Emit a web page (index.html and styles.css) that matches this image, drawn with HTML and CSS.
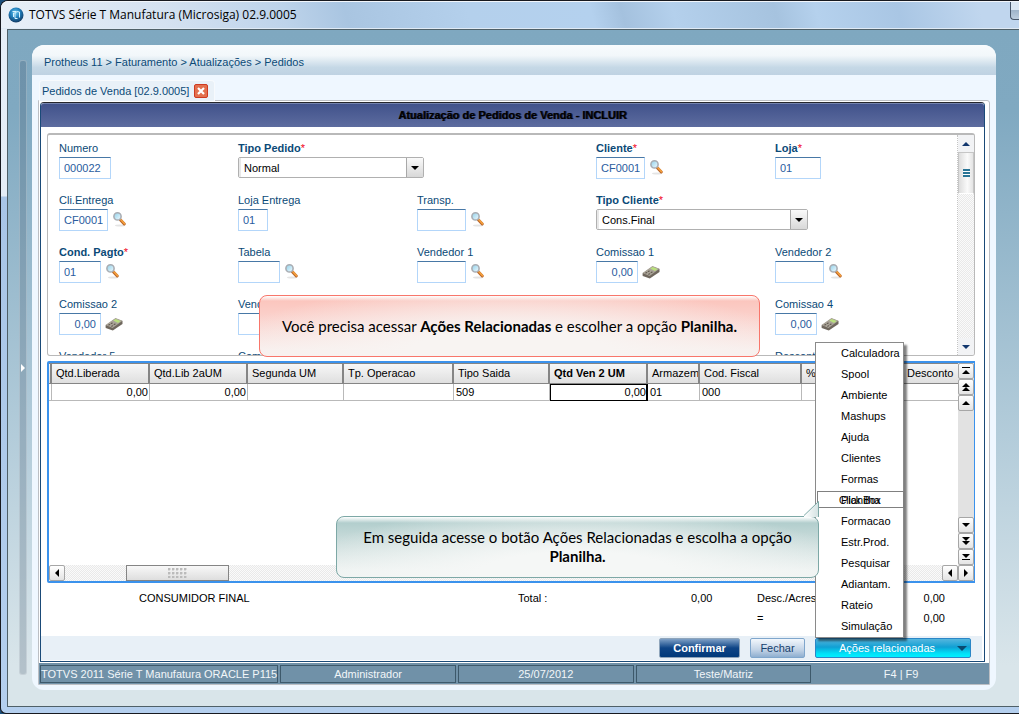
FILE: index.html
```html
<!DOCTYPE html>
<html lang="pt-BR">
<head>
<meta charset="utf-8">
<title>TOTVS Série T Manufatura</title>
<link rel="stylesheet" href="styles.css">
</head>
<body>
<svg class="defs" aria-hidden="true">
  <defs>
    <radialGradient id="orb" cx="45%" cy="35%" r="65%"><stop offset="0" stop-color="#6ec8ee"/><stop offset="0.5" stop-color="#2180bd"/><stop offset="1" stop-color="#123a63"/></radialGradient>
    <linearGradient id="lens" x1="0" y1="0" x2="1" y2="1"><stop offset="0" stop-color="#8fd0ea"/><stop offset="1" stop-color="#f2fbff"/></linearGradient>
    <linearGradient id="tail" x1="0" y1="0" x2="1" y2="0"><stop offset="0" stop-color="#fff"/><stop offset="1" stop-color="#d3e2e2"/></linearGradient>
    <symbol id="search" viewBox="0 0 16 16">
      <ellipse cx="8" cy="14.400" rx="5" ry="1" fill="#e4e4e4"/>
      <path d="M8.300 8.800l4 4.200" stroke="#b9662a" stroke-width="3" stroke-linecap="round"/>
      <path d="M8.900 8.800l3.600 3.800" stroke="#f7a13c" stroke-width="1.600" stroke-linecap="round"/>
      <circle cx="5.500" cy="5.400" r="3.600" fill="url(#lens)" stroke="#a9adb3" stroke-width="1.600"/>
    </symbol>
    <symbol id="calc" viewBox="0 0 18 14">
      <path d="M.5 8.400L10.500 1.500l7 2.500v3L7.800 13.500.700 11z" fill="#6f675d"/>
      <path d="M.5 8L10.500 1l7 2.800L7.600 11z" fill="#aaa498"/>
      <path d="M8.300 3.600L10.700 1.900l5 2-2.700 2z" fill="#b9e07d"/>
      <path d="M2.900 8.100l1.500-1 1.200.5-1.500 1zM5.400 6.400l1.500-1 1.200.5-1.500 1zM5.800 9.300l1.500-1 1.200.5-1.500 1zM8.300 7.500l1.500-1 1.200.5-1.500 1z" fill="#5c544b"/>
    </symbol>
    <symbol id="up" viewBox="0 0 8 4"><path d="M0 4L4 0l4 4z" fill="currentColor"/></symbol>
    <symbol id="down" viewBox="0 0 8 4"><path d="M0 0h8L4 4z" fill="currentColor"/></symbol>
  </defs>
</svg>
<div class="window">
  <header class="titlebar">
    <svg class="logo" viewBox="0 0 16 16"><circle cx="8" cy="8" r="7.500" fill="url(#orb)"/><path d="M4.500 4.500h3.500v1.500H5.500v4M8.500 4.500l3 .5v5.500M7 6.500v5h2.500" fill="none" stroke="#d8f3ff" stroke-width="1"/></svg>
    <h1 class="caption">TOTVS Série T Manufatura (Microsiga) 02.9.0005</h1>
    <span class="sysbutton"></span>
  </header>
  <div class="desktop">
    <div class="splitter"><svg class="splitter-arrow" viewBox="0 0 4 8"><path d="M0 0l4 4-4 4z" fill="#fff"/></svg></div>
    <div class="shell">
      <nav class="breadcrumb">Protheus 11 &gt; Faturamento &gt; Atualizações &gt; Pedidos</nav>
      <div class="tabs">
        <div class="tab"><span>Pedidos de Venda [02.9.0005]</span>
          <button class="tab-close" aria-label="Fechar aba"><svg viewBox="0 0 8 8"><path d="M1 1l6 6M7 1L1 7" stroke="#fff" stroke-width="2.200"/></svg></button>
        </div>
      </div>
      <div class="frame">
        <main class="page">
          <h2 class="page-title">Atualização de Pedidos de Venda - INCLUIR</h2>
          <section class="form-panel">
            <div class="fields">
              <div class="field"><label for="numero">Numero</label><div class="control"><input id="numero" class="w-l" value="000022"></div></div>
              <div class="field"><label class="req" for="tipo">Tipo Pedido<em>*</em></label><div class="control"><span class="combo combo-m"><select id="tipo"><option>Normal</option></select><span class="combo-btn"><svg><use href="#down"/></svg></span></span></div></div>
              <div class="field"></div>
              <div class="field"><label class="req" for="cliente">Cliente<em>*</em></label><div class="control"><input id="cliente" class="w-m" value="CF0001"><svg class="ico"><use href="#search"/></svg></div></div>
              <div class="field"><label class="req" for="loja">Loja<em>*</em></label><div class="control"><input id="loja" class="w-m2" value="01"></div></div>

              <div class="field"><label for="clie">Cli.Entrega</label><div class="control"><input id="clie" class="w-m" value="CF0001"><svg class="ico"><use href="#search"/></svg></div></div>
              <div class="field"><label for="lojae">Loja Entrega</label><div class="control"><input id="lojae" class="w-xs" value="01"></div></div>
              <div class="field"><label for="transp">Transp.</label><div class="control"><input id="transp" class="w-m"><svg class="ico"><use href="#search"/></svg></div></div>
              <div class="field"><label class="req" for="tipocli">Tipo Cliente<em>*</em></label><div class="control"><span class="combo combo-l"><select id="tipocli"><option>Cons.Final</option></select><span class="combo-btn"><svg><use href="#down"/></svg></span></span></div></div>
              <div class="field"></div>

              <div class="field"><label class="req" for="cond">Cond. Pagto<em>*</em></label><div class="control"><input id="cond" class="w-s" value="01"><svg class="ico"><use href="#search"/></svg></div></div>
              <div class="field"><label for="tabela">Tabela</label><div class="control"><input id="tabela" class="w-s"><svg class="ico"><use href="#search"/></svg></div></div>
              <div class="field"><label for="vend1">Vendedor 1</label><div class="control"><input id="vend1" class="w-m"><svg class="ico"><use href="#search"/></svg></div></div>
              <div class="field"><label for="com1">Comissao 1</label><div class="control"><input id="com1" class="w-s num" value="0,00"><svg class="ico-calc"><use href="#calc"/></svg></div></div>
              <div class="field"><label for="vend2">Vendedor 2</label><div class="control"><input id="vend2" class="w-m"><svg class="ico"><use href="#search"/></svg></div></div>

              <div class="field"><label for="com2">Comissao 2</label><div class="control"><input id="com2" class="w-s num" value="0,00"><svg class="ico-calc"><use href="#calc"/></svg></div></div>
              <div class="field"><label for="vend3">Vendedor 3</label><div class="control"><input id="vend3" class="w-m"></div></div>
              <div class="field"></div>
              <div class="field"></div>
              <div class="field"><label for="com4">Comissao 4</label><div class="control"><input id="com4" class="w-s num" value="0,00"><svg class="ico-calc"><use href="#calc"/></svg></div></div>

              <div class="field"><label>Vendedor 5</label></div>
              <div class="field"><label>Comissao 5</label></div>
              <div class="field"></div>
              <div class="field"></div>
              <div class="field"><label>Desconto 1</label></div>
            </div>
            <div class="vbar">
              <button class="vbar-btn" aria-label="Subir"><svg><use href="#up"/></svg></button>
              <span class="vbar-thumb"><i></i></span>
              <span class="vbar-track"></span>
              <button class="vbar-btn" aria-label="Descer"><svg><use href="#down"/></svg></button>
            </div>
          </section>

          <section class="grid-panel">
            <div class="grid-body">
              <div class="grid-view">
                <table class="items">
                  <colgroup><col class="c3"><col class="c98"><col class="c98"><col class="c96"><col class="c110"><col class="c96"><col class="c98"><col class="c52"><col class="c102"><col class="c102"><col></colgroup>
                  <thead><tr><th></th><th>Qtd.Liberada</th><th>Qtd.Lib 2aUM</th><th>Segunda UM</th><th>Tp. Operacao</th><th>Tipo Saida</th><th class="current">Qtd Ven 2 UM</th><th>Armazem</th><th>Cod. Fiscal</th><th>%</th><th class="last">Desconto</th></tr></thead>
                  <tbody><tr><td></td><td class="num">0,00</td><td class="num">0,00</td><td></td><td></td><td>509</td><td class="num active">0,00</td><td>01</td><td>000</td><td></td><td></td></tr></tbody>
                </table>
              </div>
              <div class="gbar">
                <button class="gbtn" aria-label="Início"><svg viewBox="0 0 8 8"><path d="M0 0h8v1H0zM0 7l4-4 4 4z"/></svg></button>
                <button class="gbtn" aria-label="Página acima"><svg viewBox="0 0 8 8"><path d="M0 4l4-4 4 4zM0 8l4-4 4 4z"/></svg></button>
                <button class="gbtn" aria-label="Linha acima"><svg viewBox="0 0 8 8"><path d="M0 6l4-4 4 4z"/></svg></button>
                <span class="gtrack"></span>
                <button class="gbtn" aria-label="Linha abaixo"><svg viewBox="0 0 8 8"><path d="M0 2h8L4 6z"/></svg></button>
                <button class="gbtn" aria-label="Página abaixo"><svg viewBox="0 0 8 8"><path d="M0 0h8L4 4zM0 4h8L4 8z"/></svg></button>
                <button class="gbtn" aria-label="Fim"><svg viewBox="0 0 8 8"><path d="M0 1h8L4 5zM0 6h8v1H0z"/></svg></button>
              </div>
            </div>
            <div class="hbar">
              <button class="gbtn" aria-label="Esquerda"><svg viewBox="0 0 8 8"><path d="M6 0v8L2 4z"/></svg></button>
              <span class="hthumb"><i></i></span>
              <span class="hrest"></span>
              <button class="gbtn" aria-label="Coluna anterior"><svg viewBox="0 0 8 8"><path d="M6 0v8L2 4z"/></svg></button>
              <button class="gbtn" aria-label="Próxima coluna"><svg viewBox="0 0 8 8"><path d="M2 0v8l4-4z"/></svg></button>
            </div>
          </section>

          <section class="totals">
            <span>CONSUMIDOR FINAL</span><span>Total :</span><span>0,00</span><span>Desc./Acres</span><span>0,00</span>
            <span></span><span></span><span></span><span>=</span><span>0,00</span>
          </section>

          <footer class="actions">
            <button class="btn btn-primary">Confirmar</button>
            <button class="btn btn-plain">Fechar</button>
            <div class="related">
              <button class="btn btn-related"><span>Ações relacionadas</span><svg class="related-arrow"><use href="#down"/></svg></button>
              <ul class="menu">
                <li>Calculadora</li><li>Spool</li><li>Ambiente</li><li>Mashups</li><li>Ajuda</li><li>Clientes</li><li>Formas</li>
                <li class="picked">Planilha<span class="clickbox">Click Box</span></li>
                <li>Formacao</li><li>Estr.Prod.</li><li>Pesquisar</li><li>Adiantam.</li><li>Rateio</li><li>Simulação</li>
              </ul>
            </div>
          </footer>

          <div class="callout callout-red"><p>Você precisa acessar <b>Ações Relacionadas</b> e escolher a opção <b>Planilha.</b></p></div>
          <div class="callout callout-teal"><svg class="callout-tail" viewBox="0 0 15 24"><path d="M0 23L14.500 8.500V24H0z" fill="url(#tail)"/><path d="M0 22.500L14.500 8.500V24" fill="none" stroke="#7da8a6"/></svg>
            <p>Em seguida acesse o botão Ações Relacionadas e escolha a opção <b>Planilha.</b></p></div>
        </main>
        <div class="status">
          <span>TOTVS 2011 Série T Manufatura ORACLE P115</span><span>Administrador</span><span>25/07/2012</span><span>Teste/Matriz</span><span class="last">F4 | F9</span>
        </div>
      </div>
    </div>
  </div>
</div>
</body>
</html>
```
FILE: styles.css
```css
* { box-sizing: border-box; }
html, body { margin: 0; background: #1b4f7c; }
body { font: 11px/16px "Liberation Sans", Arial, sans-serif; color: #000; }
button, input, select { font: inherit; margin: 0; padding: 0; }
h1, h2, p, ul { margin: 0; padding: 0; font-size: inherit; font-weight: normal; }
svg { display: block; }
.defs { position: absolute; width: 0; height: 0; }

.window {
  display: flex; flex-direction: column; min-height: 100vh; padding: 0 0 6px 6px;
  border: 1px solid #17191f; border-right: 0; border-radius: 8px 0 0 6px;
  background: linear-gradient(#e6eef7 0, #e4edf6 195px, #a8c5e6 196px, #b4cfee 100%);
}
.titlebar {
  display: flex; align-items: center; gap: 5px; height: 28px; margin-left: -6px; padding-left: 7px;
  border-top: 1px solid #f2f6fb; border-bottom: 1px solid #dfeaf5; border-radius: 7px 0 0 0;
  background: linear-gradient(75deg, #e9f0f8 0, #d5e2f1 16%, #bdd3ea 28%, #a9c5e1 34%, #b4d0ec 46%, #b4d1ee 58%, #a4c1de 61%, #b4d0ec 66%, #a6c3df 76%, #b5d1ed 80%, #a9c6e4 88%, #c0d6ee 96%);
}
.logo { width: 16px; height: 16px; }
.caption { flex: 1; font: 12px/18px "Open Sans", "Noto Sans", sans-serif; }
.sysbutton {
  align-self: flex-start; width: 9px; height: 18px; border: 1px solid #47566a; border-top: 0; border-right: 0;
  border-radius: 0 0 0 4px; background: linear-gradient(#dbe7f3 50%, #9fb4ca 50%, #bccddf);
}

.desktop {
  flex: 1; display: flex; gap: 5px; padding: 15px 23px 16px 11px;
  border: 1px solid #4f6068; border-right: 0;
  background: linear-gradient(#7fa8c0 0, #80a9c1 12%, #b3ccda 60%, #d9e5ea 94%);
}
.splitter {
  display: flex; align-items: center; justify-content: center; flex: 0 0 8px; margin: 15px 0;
  border: 1px solid rgba(255,255,255,.25); border-radius: 3px; background: rgba(60,80,100,.24);
}
.splitter-arrow { width: 4px; height: 8px; }
.shell { flex: 1; display: flex; flex-direction: column; min-width: 0; padding: 0 6px 5px; border-radius: 12px; background: #eff7ff; }
.breadcrumb {
  height: 30px; margin: 0 -6px; padding: 1px 12px; border-radius: 12px 12px 0 0; line-height: 32px; color: #0b4a77;
  background: linear-gradient(#f8fbfd 0, #f2f7fa 35%, #c5d8e6 75%, #bfd2e2 100%);
}
.tabs { display: flex; padding: 5px 0 0 1px; }
.tab {
  position: relative; z-index: 1; display: flex; align-items: center; gap: 5px; height: 21px; margin-bottom: -1px; padding: 0 6px 0 2px;
  border: 1px solid #f7fafd; border-bottom: 0; border-radius: 4px 4px 0 0; background: #e9f1f8; color: #0b4a77;
}
.tab-close {
  display: flex; align-items: center; justify-content: center; width: 14px; height: 14px;
  border: 1px solid #cf3a20; border-radius: 2px; background: #e3704e;
}
.tab-close svg { width: 8px; height: 8px; }

.frame { flex: 1; display: flex; flex-direction: column; padding: 1px 0 0; border: 1px solid #bcbfc4; border-radius: 0 3px 0 0; background: #fff; }
.page {
  position: relative; flex: 1; display: flex; flex-direction: column; margin: 0 4px 1px 1px;
  border: 1px solid #1a4a78; border-top-color: #25262c; border-radius: 4px 4px 0 0; background: #fff;
}
.page-title {
  height: 24px; border-top: 1px solid #7483ae; border-radius: 3px 3px 0 0; font-weight: bold; line-height: 22px; text-align: center;
  text-shadow: 1px 0 #1a1e38; background: linear-gradient(#41528b, #5d6c9f);
}

.form-panel { display: flex; height: 223px; margin: 6px 9px 0 6px; overflow: hidden; border: 1px solid #b9b9b9; border-top-width: 2px; border-radius: 3px; }
.fields { flex: 1; display: grid; grid-template-columns: repeat(5, minmax(0, 1fr)); grid-auto-rows: 52px; padding: 5px 3px 0 11px; }
.field label { display: block; width: max-content; margin-bottom: 1px; color: #0b4a77; }
.field .req { font-weight: bold; }
.field em { color: #f00020; font-style: normal; font-weight: normal; }
.control { display: flex; gap: 4px; }
.control input {
  height: 22px; padding: 0 4px; border: 1px solid #b3d6fa; border-top-color: #4878a6; border-radius: 0;
  background: #fff; color: #2a5c9e; outline: 0;
}
.control .num { text-align: right; }
.w-xs { width: 30px; }
.w-s { width: 42px; }
.w-m2 { width: 46px; }
.w-m { width: 49px; }
.w-l { width: 52px; }
.ico { width: 16px; height: 16px; margin-top: 2px; }
.ico-calc { width: 18px; height: 14px; margin-top: 4px; }
.combo { display: flex; flex: none; height: 21px; border: 1px solid #b0b0b0; border-radius: 2px; background: #fff; }
.combo select { flex: 1; appearance: none; border: 0; border-left: 2px solid #e8e8e8; padding: 0 3px; background: transparent; color: #000; }
.combo-btn { display: flex; align-items: center; justify-content: center; width: 17px; border-left: 1px solid #a8a8a8; background: linear-gradient(#fafafa, #d8d8d8); }
.combo-btn svg { width: 8px; height: 4px; }
.combo-m { width: 186px; }
.combo-l { width: 212px; }

.vbar { display: flex; flex-direction: column; width: 17px; border-left: 1px dotted #c4c4c4; }
.vbar-btn { display: flex; align-items: center; justify-content: center; height: 17px; border: 0; background: #f2f3f5; color: #12386e; }
.vbar-btn svg { width: 8px; height: 4px; }
.vbar-thumb { display: flex; align-items: center; justify-content: center; height: 42px; border: 1px solid #c6c6c6; border-bottom-color: #fff; background: linear-gradient(90deg, #ddd, #fafafa 60%, #e4e4e4); }
.vbar-thumb i { width: 7px; height: 8px; background: repeating-linear-gradient(#2a7596 0 2px, #fff 2px 3px); }
.vbar-track, .hbar { background: repeating-conic-gradient(#e9e9e9 0 25%, #fafafa 0 50%) 0 0 / 2px 2px; }
.vbar-track { flex: 1; }

.grid-panel { flex: 1; display: flex; flex-direction: column; margin: 5px 9px 0 6px; border: 2px solid #3b92ec; border-right-width: 1px; border-radius: 2px 0 0 2px; }
.grid-body { flex: 1; display: flex; }
.grid-view { flex: 1; min-width: 0; overflow: hidden; }
.items { width: 100%; table-layout: fixed; border-collapse: separate; border-spacing: 0; }
.c3 { width: 3px; }
.c52 { width: 52px; }
.c96 { width: 96px; }
.c98 { width: 98px; }
.c102 { width: 102px; }
.c110 { width: 110px; }
.items th {
  height: 21px; padding: 0 0 1px 4px; overflow: hidden; border: solid #858585; border-width: 1px 2px 1px 0;
  background: linear-gradient(#f7f7f7, #dfdfdf); font-weight: normal; text-align: left; white-space: nowrap;
}
.items th.current { font-weight: bold; }
.items th:first-child, .items td:first-child { padding: 0; }
.items th.last { border-right: 0; padding-left: 3px; }
.items td { height: 17px; padding: 0 1px 0 2px; border: solid #b9b9b9; border-width: 0 1px 1px 0; line-height: 15px; }
.items td:last-child { border-right: 0; }
.items .num { text-align: right; }
.items .active { padding: 0; border-right: 2px solid #000; border-bottom-color: #000; box-shadow: inset 0 1px #000, inset 1px 0 #000; }

.gbar { display: flex; flex-direction: column; width: 16px; background: #e2e2e2; }
.gtrack { flex: 1; }
.gbtn { display: flex; align-items: center; justify-content: center; width: 16px; height: 16px; border: 1px solid #a6a6a6; border-radius: 2px; background: linear-gradient(#fff, #e4e4e4); }
.gbtn svg { width: 8px; height: 8px; }
.hbar { display: flex; height: 16px; }
.hthumb { display: flex; align-items: center; justify-content: center; width: 103px; margin-left: 61px; border: 1px solid #858585; background: linear-gradient(#f8f8f8, #dedede); }
.hthumb i { width: 19px; height: 10px; background: radial-gradient(circle at 1px 1px, #bbb 1px, transparent 2px) 0 0 / 4px 4px; }
.hrest { flex: 1; }

.totals { display: grid; grid-template-columns: 379px 173px 66px 1fr auto; grid-auto-rows: 20px; margin-top: 5px; padding: 0 39px 8px 98px; line-height: 20px; }

.actions { display: flex; justify-content: flex-end; gap: 10px; margin: 0 2px 1px 0; padding: 2px 11px; background: #e8f0f7; }
.btn { display: block; height: 20px; padding: 0 9px; border: 1px solid #7fa6cc; border-radius: 2px; line-height: 18px; }
.btn-primary { width: 81px; background: linear-gradient(#7ea0c6 0, #0e4486 50%, #00397a); border-color: #8fa5bb; color: #fff; font-weight: bold; }
.btn-plain { width: 55px; background: linear-gradient(#f2f7fc, #c2d3e6 60%, #8fafd0); color: #16406c; }
.related { position: relative; }
.btn-related { display: flex; align-items: center; justify-content: space-between; width: 156px; padding: 0 3px 0 23px; border-color: #2a86c6; background: linear-gradient(#55b6de 0, #10a0d4 45%, #00e0f8 80%, #00f0ff); color: #fff; }
.related-arrow { width: 10px; height: 5px; color: #0a4a70; }
.menu { position: absolute; left: 0; bottom: 100%; width: 89px; border: 1px solid #8a8a8a; background: #fff; box-shadow: 3px 3px 2px rgba(0,0,0,.5); list-style: none; }
.menu li { height: 21px; padding-left: 25px; line-height: 21px; white-space: nowrap; }
.menu .picked { position: relative; }
.clickbox { position: absolute; inset: 1px -1px 3px 1px; padding-left: 21px; border: 1px solid #808080; font-size: 10px; line-height: 17px; }

.callout { position: absolute; display: flex; align-items: center; justify-content: center; border: 1px solid; border-radius: 8px; font: 15px/19px Lato, "Open Sans", sans-serif; text-align: center; }
.callout-red {
  left: 218px; top: 192px; width: 501px; height: 62px; border-color: #f8766b;
  background: radial-gradient(ellipse at 50% 100%, #f8f4f2 30%, rgba(248,244,242,0) 85%), linear-gradient(#fff 0, #fbc6be 5px, #fbcfc9 30%, #f8efed 90%);
}
.callout-teal {
  left: 295px; top: 413px; width: 483px; height: 62px; padding: 0 20px; border-color: #7da8a6;
  background: radial-gradient(ellipse at 50% 100%, #f5f7f6 30%, rgba(245,247,246,0) 85%), linear-gradient(#fff 0, #b2cecd 6px, #c3d8d7 30%, #eff3f2 90%);
}
.callout-tail { position: absolute; right: -1px; top: -24px; width: 15px; height: 24px; }

.status { display: grid; grid-template-columns: 237fr 176fr 176fr 176fr 176fr; gap: 2px; padding: 2px 0 1px 1px; background: #7091a8; color: #f2f6f9; }
.status span { height: 18px; border: 1px solid #3d596b; line-height: 16px; text-align: center; white-space: nowrap; }
.status .last { border-color: transparent; }
```
